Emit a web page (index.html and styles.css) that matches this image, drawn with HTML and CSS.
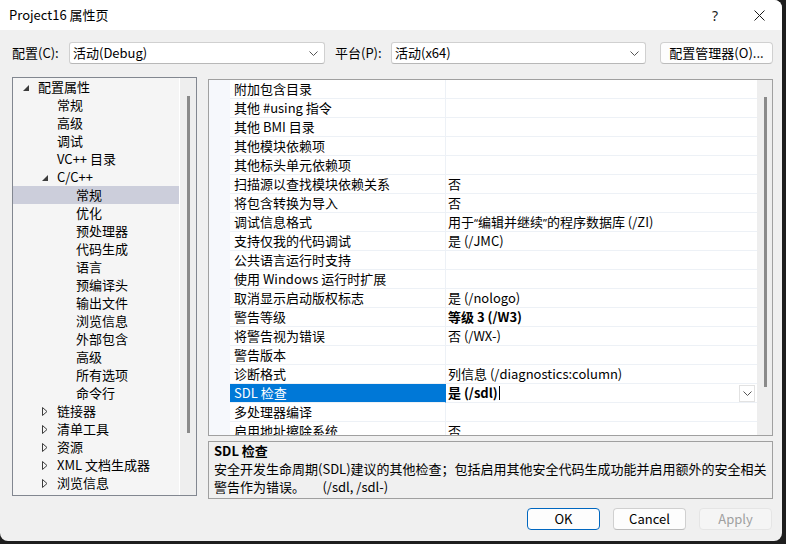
FILE: index.html
```html
<!DOCTYPE html>
<html lang="zh-CN">
<head>
<meta charset="utf-8">
<title>Project16 属性页</title>
<link rel="stylesheet" href="styles.css">
</head>
<body>
<div class="window">
  <div class="titlebar">
    <div class="title">Project16 属性页</div>
    <div class="tb-btn help">?</div>
    <div class="tb-btn close">
      <svg width="11" height="11" viewBox="0 0 11 11"><path d="M0.5 0.5 L10.5 10.5 M10.5 0.5 L0.5 10.5" stroke="#1a1a1a" stroke-width="1" fill="none"/></svg>
    </div>
  </div>

  <div class="config-row">
    <div class="lbl lbl-config">配置(C):</div>
    <div class="combo combo-config">
      <span class="combo-text">活动(Debug)</span>
      <svg class="chev" width="9" height="5" viewBox="0 0 9 5"><path d="M0.5 0.5 L4.5 4.5 L8.5 0.5" stroke="#555" stroke-width="1" fill="none"/></svg>
    </div>
    <div class="lbl lbl-platform">平台(P):</div>
    <div class="combo combo-platform">
      <span class="combo-text">活动(x64)</span>
      <svg class="chev" width="9" height="5" viewBox="0 0 9 5"><path d="M0.5 0.5 L4.5 4.5 L8.5 0.5" stroke="#555" stroke-width="1" fill="none"/></svg>
    </div>
    <div class="btn btn-mgr">配置管理器(O)...</div>
  </div>

  <div class="main">
    <div class="tree">
      <div class="tree-list">
        <div class="trow l0"><span class="arr"><svg width="6" height="6" viewBox="0 0 6 6"><path d="M6 0 L6 6 L0 6 Z" fill="#3c3c3c"/></svg></span>配置属性</div>
        <div class="trow l1"><span class="arr"></span>常规</div>
        <div class="trow l1"><span class="arr"></span>高级</div>
        <div class="trow l1"><span class="arr"></span>调试</div>
        <div class="trow l1"><span class="arr"></span>VC++ 目录</div>
        <div class="trow l1"><span class="arr"><svg width="6" height="6" viewBox="0 0 6 6"><path d="M6 0 L6 6 L0 6 Z" fill="#3c3c3c"/></svg></span>C/C++</div>
        <div class="trow l2 sel"><span class="arr"></span>常规</div>
        <div class="trow l2"><span class="arr"></span>优化</div>
        <div class="trow l2"><span class="arr"></span>预处理器</div>
        <div class="trow l2"><span class="arr"></span>代码生成</div>
        <div class="trow l2"><span class="arr"></span>语言</div>
        <div class="trow l2"><span class="arr"></span>预编译头</div>
        <div class="trow l2"><span class="arr"></span>输出文件</div>
        <div class="trow l2"><span class="arr"></span>浏览信息</div>
        <div class="trow l2"><span class="arr"></span>外部包含</div>
        <div class="trow l2"><span class="arr"></span>高级</div>
        <div class="trow l2"><span class="arr"></span>所有选项</div>
        <div class="trow l2"><span class="arr"></span>命令行</div>
        <div class="trow l1"><span class="arr"><svg width="6" height="9" viewBox="0 0 6 9"><path d="M0.5 0.5 L5 4.5 L0.5 8.5 Z" fill="none" stroke="#3c3c3c" stroke-width="1"/></svg></span>链接器</div>
        <div class="trow l1"><span class="arr"><svg width="6" height="9" viewBox="0 0 6 9"><path d="M0.5 0.5 L5 4.5 L0.5 8.5 Z" fill="none" stroke="#3c3c3c" stroke-width="1"/></svg></span>清单工具</div>
        <div class="trow l1"><span class="arr"><svg width="6" height="9" viewBox="0 0 6 9"><path d="M0.5 0.5 L5 4.5 L0.5 8.5 Z" fill="none" stroke="#3c3c3c" stroke-width="1"/></svg></span>资源</div>
        <div class="trow l1"><span class="arr"><svg width="6" height="9" viewBox="0 0 6 9"><path d="M0.5 0.5 L5 4.5 L0.5 8.5 Z" fill="none" stroke="#3c3c3c" stroke-width="1"/></svg></span>XML 文档生成器</div>
        <div class="trow l1"><span class="arr"><svg width="6" height="9" viewBox="0 0 6 9"><path d="M0.5 0.5 L5 4.5 L0.5 8.5 Z" fill="none" stroke="#3c3c3c" stroke-width="1"/></svg></span>浏览信息</div>
        <div class="trow l1"><span class="arr"><svg width="6" height="9" viewBox="0 0 6 9"><path d="M0.5 0.5 L5 4.5 L0.5 8.5 Z" fill="none" stroke="#3c3c3c" stroke-width="1"/></svg></span>生成事件</div>
      </div>
      <div class="vscroll tree-scroll"><div class="thumb tree-thumb"></div></div>
    </div>

    <div class="right">
      <div class="grid">
        <div class="grid-rows">
          <div class="prow"><div class="gut"></div><div class="pname">附加包含目录</div><div class="pval"></div></div>
          <div class="prow"><div class="gut"></div><div class="pname">其他 #using 指令</div><div class="pval"></div></div>
          <div class="prow"><div class="gut"></div><div class="pname">其他 BMI 目录</div><div class="pval"></div></div>
          <div class="prow"><div class="gut"></div><div class="pname">其他模块依赖项</div><div class="pval"></div></div>
          <div class="prow"><div class="gut"></div><div class="pname">其他标头单元依赖项</div><div class="pval"></div></div>
          <div class="prow"><div class="gut"></div><div class="pname">扫描源以查找模块依赖关系</div><div class="pval">否</div></div>
          <div class="prow"><div class="gut"></div><div class="pname">将包含转换为导入</div><div class="pval">否</div></div>
          <div class="prow"><div class="gut"></div><div class="pname">调试信息格式</div><div class="pval">用于<span class="q">“</span>编辑并继续<span class="q">”</span>的程序数据库 (/ZI)</div></div>
          <div class="prow"><div class="gut"></div><div class="pname">支持仅我的代码调试</div><div class="pval">是 (/JMC)</div></div>
          <div class="prow"><div class="gut"></div><div class="pname">公共语言运行时支持</div><div class="pval"></div></div>
          <div class="prow"><div class="gut"></div><div class="pname">使用 Windows 运行时扩展</div><div class="pval"></div></div>
          <div class="prow"><div class="gut"></div><div class="pname">取消显示启动版权标志</div><div class="pval">是 (/nologo)</div></div>
          <div class="prow"><div class="gut"></div><div class="pname">警告等级</div><div class="pval bold">等级 3 (/W3)</div></div>
          <div class="prow"><div class="gut"></div><div class="pname">将警告视为错误</div><div class="pval">否 (/WX-)</div></div>
          <div class="prow"><div class="gut"></div><div class="pname">警告版本</div><div class="pval"></div></div>
          <div class="prow"><div class="gut"></div><div class="pname">诊断格式</div><div class="pval">列信息 (/diagnostics:column)</div></div>
          <div class="prow psel"><div class="gut"></div><div class="pname">SDL 检查</div><div class="pval edit"><span class="bold">是 (/sdl)</span><span class="caret"></span><span class="spacer"></span><span class="dd"><svg width="9" height="5" viewBox="0 0 9 5"><path d="M0.5 0.5 L4.5 4.5 L8.5 0.5" stroke="#555" stroke-width="1" fill="none"/></svg></span></div></div>
          <div class="prow"><div class="gut"></div><div class="pname">多处理器编译</div><div class="pval"></div></div>
          <div class="prow"><div class="gut"></div><div class="pname">启用地址擦除系统</div><div class="pval">否</div></div>
        </div>
        <div class="vscroll grid-scroll"><div class="thumb grid-thumb"></div></div>
      </div>
      <div class="desc">
        <div class="desc-title">SDL 检查</div>
        <div class="desc-text">安全开发生命周期(SDL)建议的其他检查；包括启用其他安全代码生成功能并启用额外的安全相关<br>警告作为错误。&nbsp;&nbsp;&nbsp;&nbsp;&nbsp;&nbsp;(/sdl, /sdl-)</div>
      </div>
    </div>
  </div>

  <div class="footer">
    <div class="btn fbtn default">OK</div>
    <div class="btn fbtn">Cancel</div>
    <div class="btn fbtn disabled">Apply</div>
  </div>
</div>
</body>
</html>
```

FILE: styles.css
```css
html, body {
  margin: 0;
  padding: 0;
}
body {
  width: 786px;
  height: 544px;
  overflow: hidden;
  background: #1e1e1e;
  font-family: "Noto Sans CJK SC", "Noto Sans", sans-serif;
  font-size: 13px;
  color: #000;
}
.window {
  width: 782px;
  height: 541px;
  background: #f0f0f0;
  border-radius: 0 8px 8px 8px;
  overflow: hidden;
  display: flex;
  flex-direction: column;
}
.titlebar {
  height: 30px;
  background: #fff;
  display: flex;
  align-items: center;
  padding-left: 9px;
  flex: none;
}
.title {
  flex: 1;
  line-height: 30px;
}
.tb-btn {
  width: 46px;
  height: 30px;
  display: flex;
  align-items: center;
  justify-content: center;
  font-size: 14px;
}
.help {
  font-family: "Noto Sans", sans-serif;
  color: #1a1a1a;
  padding-left: 4px;
  box-sizing: border-box;
}

.config-row {
  display: flex;
  align-items: center;
  height: 22px;
  margin-top: 12px;
  padding-left: 12px;
  flex: none;
}
.lbl {
  line-height: 22px;
}
.lbl-config { width: 57px; }
.lbl-platform { width: 56px; margin-left: 10px; }
.combo {
  box-sizing: border-box;
  height: 22px;
  background: #fff;
  border: 1px solid #d0d0d0;
  border-bottom-color: #b8b8b8;
  border-radius: 3px;
  display: flex;
  align-items: center;
  padding: 0 6px 0 3px;
}
.combo-config { width: 256px; }
.combo-platform { width: 255px; }
.combo-text { flex: 1; line-height: 20px; }
.chev { display: block; }
.btn {
  box-sizing: border-box;
  height: 22px;
  background: #fdfdfd;
  border: 1px solid #d0d0d0;
  border-bottom-color: #bcbcbc;
  border-radius: 4px;
  display: flex;
  align-items: center;
  justify-content: center;
  line-height: 20px;
}
.btn-mgr {
  width: 113px;
  margin-left: 14px;
}

.main {
  display: flex;
  align-items: flex-start;
  margin-top: 13px;
  padding-left: 12px;
  flex: none;
}
.tree {
  box-sizing: border-box;
  width: 185px;
  height: 419px;
  border: 1px solid #828790;
  background: #f5f5f5;
  display: flex;
  overflow: hidden;
}
.tree-list {
  width: 166px;
  overflow: hidden;
}
.trow {
  height: 18px;
  line-height: 18px;
  display: flex;
  align-items: center;
  white-space: nowrap;
}
.trow.l0 { padding-left: 10px; }
.trow.l1 { padding-left: 29px; }
.trow.l2 { padding-left: 48px; }
.trow.sel { background: #cccedb; }
.arr {
  width: 15px;
  height: 18px;
  display: flex;
  align-items: center;
  flex: none;
}
.arr svg { display: block; }
.trow .arr svg[height="6"] { margin-top: 1px; }

.vscroll {
  border-left: 1px solid #fff;
  background: #eeeeee;
  flex: none;
}
.tree-scroll { width: 16px; }
.thumb {
  width: 3px;
  background: #8a8a8a;
}
.tree-thumb {
  margin: 18px 0 0 7px;
  height: 337px;
}

.right {
  width: 565px;
  margin-left: 11px;
  margin-top: 2px;
  display: flex;
  flex-direction: column;
}
.grid {
  box-sizing: border-box;
  height: 357px;
  border: 1px solid #a0a0a0;
  background: #fff;
  display: flex;
  overflow: hidden;
}
.grid-rows {
  flex: 1;
  overflow: hidden;
}
.grid-scroll {
  width: 15px;
  border-left: none;
}
.grid-thumb {
  margin: 17px 0 0 7px;
  height: 290px;
}
.prow {
  display: grid;
  grid-template-columns: 21px 215px 1fr;
  height: 19px;
}
.gut {
  background: #f6f8fc;
}
.pname {
  padding-left: 4px;
  line-height: 18px;
  border-bottom: 1px solid #edf1f6;
  white-space: nowrap;
  overflow: hidden;
}
.pval {
  padding-left: 2px;
  line-height: 18px;
  border-left: 1px solid #edf1f6;
  border-bottom: 1px solid #edf1f6;
  white-space: nowrap;
  overflow: hidden;
}
.q {
  font-family: "Noto Sans", sans-serif;
  font-size: 11px;
}
.bold { font-weight: bold; }
.psel .pname {
  background: #0078d7;
  color: #fff;
}
.psel .pval {
  border-left-color: #0078d7;
}
.pval.edit {
  display: flex;
  align-items: center;
}
.caret {
  width: 1px;
  height: 14px;
  background: #000;
  margin-left: 1px;
}
.spacer { flex: 1; }
.dd {
  box-sizing: border-box;
  width: 16px;
  height: 17px;
  margin-right: 2px;
  border: 1px solid #e2e2e2;
  background: #fff;
  display: flex;
  align-items: center;
  justify-content: center;
}
.dd svg { display: block; }

.desc {
  box-sizing: border-box;
  height: 58px;
  margin-top: 5px;
  border: 1px solid #a0a0a0;
  padding: 0 5px;
  line-height: 18px;
}
.desc-title { font-weight: bold; }
.desc-text { white-space: nowrap; }

.footer {
  display: flex;
  justify-content: flex-end;
  gap: 13px;
  margin-top: 9px;
  padding-right: 10px;
  flex: none;
}
.fbtn {
  width: 73px;
  background: #fdfdfd;
}
.fbtn.default {
  border: 1px solid #0067c0;
}
.fbtn.disabled {
  color: #a0a0a0;
  border-color: #e5e5e5;
  background: #f5f5f5;
}
```
